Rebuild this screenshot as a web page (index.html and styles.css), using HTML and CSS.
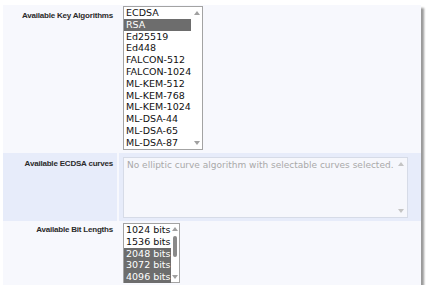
FILE: index.html
```html
<!DOCTYPE html>
<html>
  <head>
    <title>Key algorithms</title>
    <link rel="stylesheet" href="styles.css">
  </head>
  <body>
    <div class="panel">
      <div class="row">
        <div class="label">Available Key Algorithms</div>
        <div class="field">
          <div class="listbox algs">
            <ul class="opts">
              <li>ECDSA</li>
              <li class="sel">RSA</li>
              <li>Ed25519</li>
              <li>Ed448</li>
              <li>FALCON-512</li>
              <li>FALCON-1024</li>
              <li>ML-KEM-512</li>
              <li>ML-KEM-768</li>
              <li>ML-KEM-1024</li>
              <li>ML-DSA-44</li>
              <li>ML-DSA-65</li>
              <li>ML-DSA-87</li>
            </ul>
            <div class="sbar"><span class="up"></span><span class="track"></span><span class="down"></span></div>
          </div>
        </div>
      </div>
      <div class="row alt">
        <div class="label">Available ECDSA curves</div>
        <div class="field">
          <div class="textbox">
            <span class="placeholder">No elliptic curve algorithm with selectable curves selected.</span>
            <div class="sbar dim"><span class="up"></span><span class="track"></span><span class="down"></span></div>
          </div>
        </div>
      </div>
      <div class="row last">
        <div class="label">Available Bit Lengths</div>
        <div class="field">
          <div class="listbox bits">
            <ul class="opts">
              <li>1024 bits</li>
              <li>1536 bits</li>
              <li class="sel">2048 bits</li>
              <li class="sel">3072 bits</li>
              <li class="sel">4096 bits</li>
            </ul>
            <div class="sbar"><span class="up"></span><span class="track"><i class="thumb"></i></span><span class="down"></span></div>
          </div>
        </div>
      </div>
    </div>
  </body>
</html>
```

FILE: styles.css
```css
body { margin: 0; background: #fff; font-family: "DejaVu Sans", Verdana, sans-serif; }

.panel { margin: 5px 0 0 3px; width: 418px; background: #f7f8fd; box-shadow: 3px 3px 2px #9a9a9a; display: flex; flex-direction: column; gap: 1px; }

.row { display: grid; grid-template-columns: 114px 1fr; column-gap: 2px; height: 147px; }
.row.alt { height: 68px; }
.row.alt .label, .row.alt .field { background: #e7ecfa; }
.row.last { height: 63px; }

.label { font-family: "Liberation Sans", Arial, sans-serif; font-weight: bold; font-size: 8px; letter-spacing: -0.2px; color: #2a2a2a; text-align: right; padding: 6px 4px 0 0; }
.row.last .label { padding-top: 3px; }
.field { padding: 1px 0 0 4px; }
.row.alt .field { padding-top: 4px; }

.listbox { display: flex; background: #fff; border: 1px solid #a3a3a3; font-size: 9.5px; color: #111; }
.algs { width: 78px; height: 142px; }
.bits { width: 55px; height: 58px; }

.opts { list-style: none; margin: 0; padding: 0; flex-grow: 1; }
.opts li { line-height: 11.8px; padding-left: 2px; white-space: nowrap; }
.opts li.sel { background: #6d6d6d; color: #fff; }

.sbar { width: 12px; display: flex; flex-direction: column; align-items: center; padding: 4px 0; }
.sbar .track { flex-grow: 1; display: flex; justify-content: center; padding: 2px 0; }
.sbar .up { width: 0; height: 0; border-left: 3px solid transparent; border-right: 3px solid transparent; border-bottom: 4px solid #a0a0a0; }
.sbar .down { width: 0; height: 0; border-left: 3px solid transparent; border-right: 3px solid transparent; border-top: 4px solid #a0a0a0; }
.sbar .thumb { display: block; width: 4px; height: 21px; margin-top: 3px; background: #8a8a8a; border-radius: 2px; }
.bits .sbar { padding: 3px 0; }

.textbox { display: flex; width: 283px; height: 59px; background: #f6f7fc; border: 1px solid #d6dbe7; font-size: 9px; }
.placeholder { flex-grow: 1; color: #a9a9a9; padding: 2px 0 0 3px; white-space: nowrap; }
.sbar.dim .up { border-bottom-color: #c4c4c4; }
.sbar.dim .down { border-top-color: #c4c4c4; }
```
